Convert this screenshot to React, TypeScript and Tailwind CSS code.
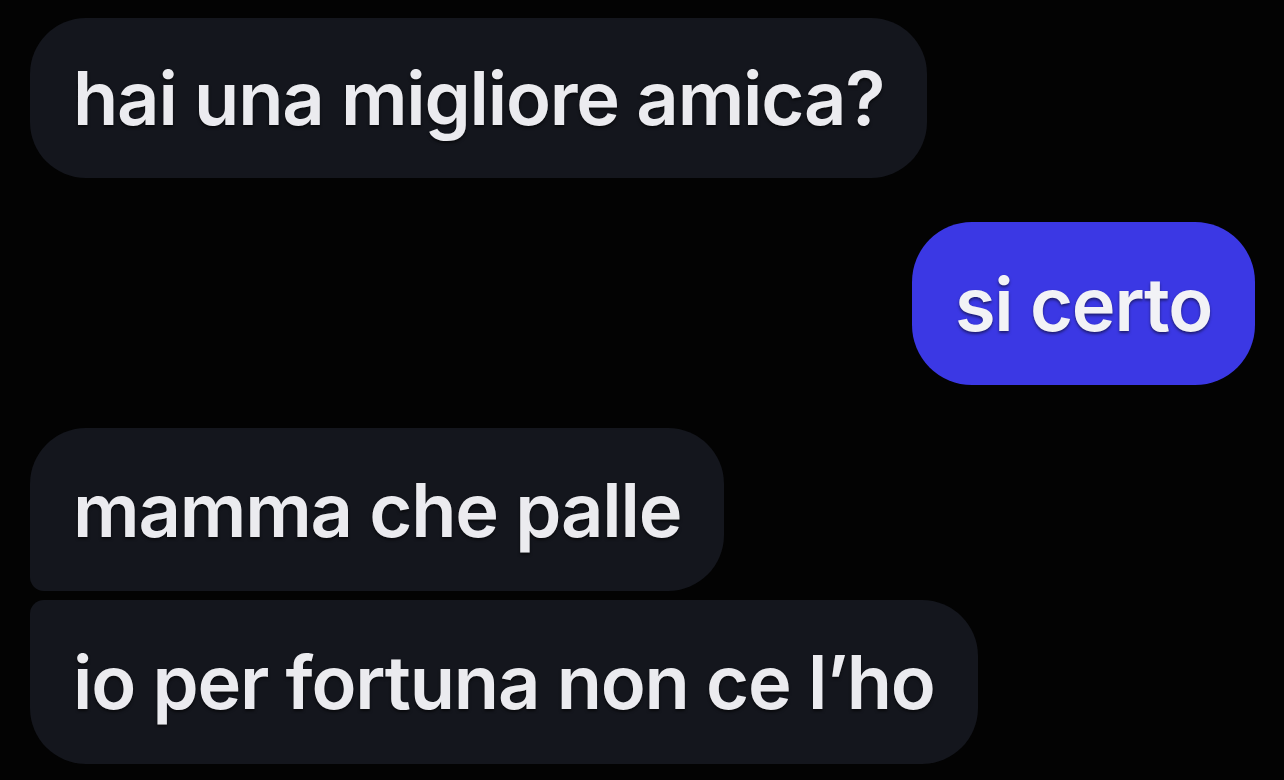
import React from "react";

const font = { fontFamily: "Inter, 'Liberation Sans', Arial, sans-serif" };

export default function App() {
  return (
    <div
      className="w-[1284px] h-[780px] bg-[#030303] overflow-hidden flex flex-col pt-[18px] pl-[30px] pr-[29px]"
      style={font}
    >
      <div className="flex">
        <div className="h-[160px] flex items-center px-[43px] rounded-[56px] bg-[#14161d] text-[#ebebef] text-[74px] font-semibold tracking-[-1.2px] leading-none [text-shadow:0_2px_3px_rgba(0,0,0,0.6)]">
          hai una migliore amica?
        </div>
      </div>
      <div className="flex justify-end mt-[44px]">
        <div className="h-[163px] flex items-center px-[43px] rounded-[60px] bg-[#3b38e4] text-[#f2f2f6] text-[74px] font-semibold tracking-[-1.2px] leading-none [text-shadow:0_2px_3px_rgba(0,0,0,0.5)]">
          si certo
        </div>
      </div>
      <div className="flex flex-col items-start mt-[43px] gap-[9px]">
        <div className="h-[163px] flex items-center px-[43px] rounded-[56px] rounded-bl-[14px] bg-[#14161d] text-[#ebebef] text-[74px] font-semibold tracking-[-1.2px] leading-none [text-shadow:0_2px_3px_rgba(0,0,0,0.6)]">
          mamma che palle
        </div>
        <div className="h-[164px] flex items-center px-[43px] rounded-[56px] rounded-tl-[14px] bg-[#14161d] text-[#ebebef] text-[74px] font-semibold tracking-[-1.2px] leading-none [text-shadow:0_2px_3px_rgba(0,0,0,0.6)]">
          io per fortuna non ce l’ho
        </div>
      </div>
    </div>
  );
}
